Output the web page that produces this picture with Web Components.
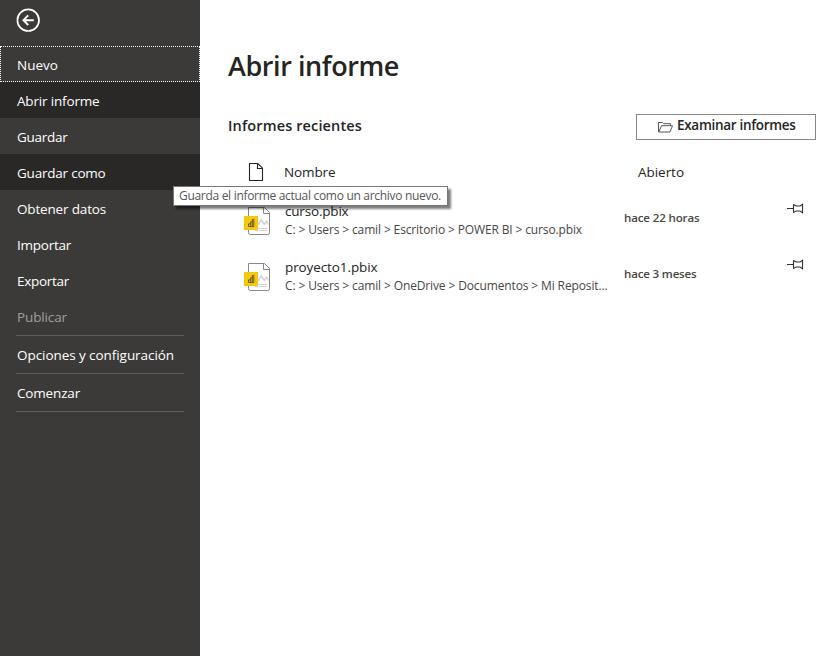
<!DOCTYPE html>
<html lang="es">
<head>
<meta charset="utf-8">
<title>Abrir informe</title>
<style>
html,body{margin:0;height:100%;background:#fff;overflow:hidden}
body{font-family:"Open Sans","Noto Sans",sans-serif;color:#252423}
</style>
</head>
<body>
<backstage-view></backstage-view>
<script>
const define=(name,html,setup)=>customElements.define(name,class extends HTMLElement{
  connectedCallback(){
    if(this.shadowRoot)return;
    const root=this.attachShadow({mode:'open'});
    root.innerHTML=html;
    if(setup)setup(this,root);
  }
});

/* Single line of text whose letter spacing is adjusted to fill a given width. */
define('fit-text',`<style>
:host{display:block;white-space:nowrap}
span{display:inline-block}
</style><span></span>`,(el,root)=>{
  const s=root.querySelector('span');
  const t=el.getAttribute('text');
  s.textContent=t;
  const w=+el.getAttribute('w');
  s.style.letterSpacing=((w-s.getBoundingClientRect().width)/t.length).toFixed(3)+'px';
});

define('back-button',`<style>
:host{display:block;height:46px;box-sizing:border-box;padding:8px 0 0 16px}
svg{display:block}
</style>
<svg width="24" height="24" viewBox="0 0 24 24" fill="none" stroke="#fff"><circle cx="12.2" cy="12.2" r="10.8" stroke-width="1.7"/><path d="M17.8 12.2H7.6M12.2 7.4L7.4 12.2l4.8 4.8" stroke-width="1.9"/></svg>`);

define('nav-item',`<style>
:host{display:flex;align-items:center;height:36px;box-sizing:border-box;padding:2px 0 0 17px;font-size:13.5px;line-height:20px;color:#fff}
:host([dark]){background:#292827}
:host([focused]){border:1px dotted #fff;padding:2px 0 0 16px}
:host([disabled]){color:#a19f9d}
</style><slot></slot>`);

define('nav-divider',`<style>
:host{display:block;height:1px;margin:1px 16px 0 16px;background:#605e5c}
</style>`);

define('side-nav',`<style>
:host{display:block;background:#3b3a38}
</style>
<back-button></back-button><slot></slot>`);

define('browse-button',`<style>
:host{display:flex;box-sizing:border-box;width:180px;height:26px;border:1px solid #8a8886;padding:0 0 0 21px;gap:4px;font-size:13.5px;line-height:21px;font-weight:600}
svg{margin-top:6px;flex:none}
</style>
<svg width="15" height="12" viewBox="0 0 15 12" fill="none" stroke="#555" stroke-width="1"><path d="M.5 10.8V1.5h4l1.2 1.2h6.8v2M.8 11L3.5 4.7h11L12 11z"/></svg>
<slot></slot>`);

define('page-icon',`<style>:host{display:block}svg{display:block}</style>
<svg width="16" height="20" viewBox="0 0 16 20" fill="none" stroke="#252423" stroke-width="1.1"><path d="M1.5 1.5h8.3l4.7 4.7v12.3h-13zM9.5 1.5v5h5"/></svg>`);

define('report-icon',`<style>:host{display:block}svg{display:block}</style>
<svg width="28" height="30" viewBox="0 0 28 30" fill="none">
<path d="M4.5 1.5h16l5 5v20.2q0 1.8-1.8 1.8H6.3q-1.8 0-1.8-1.8z" fill="#fff" stroke="#8a8886"/>
<path d="M19.5 1.5v6h6" stroke="#8a8886"/>
<path d="M14 19l3.2-5 3.2 4.5 2.2-3 1.8 3" stroke="#d2d0ce" stroke-width="1.3"/>
<path d="M11 22.5h12M11 24.5h12" stroke="#d8d6d4" stroke-width="1"/>
<path d="M0 10h14v14H0z" fill="#f2c811"/>
<path d="M4.5 20.5v-2.6h2.2M6.7 20.5v-4.6h1.6M4.5 20.5h5.3v-7H8.3v7" stroke="#5c5012" stroke-width=".9"/>
</svg>`);

define('pin-icon',`<style>:host{display:block}svg{display:block}</style>
<svg width="18" height="12" viewBox="0 0 18 12" fill="none" stroke="#323130" stroke-width="1.1"><path d="M0 5.5h6.5M6.5 1.3v8.4M6.5 1.5l2.7 1.5H13l2.5-1.7v8.4L13 8H9.2l-2.7 1.5"/></svg>`);

define('report-row',`<style>
:host{display:grid;grid-template-columns:41px 339px 163px 18px;height:56px}
.name{font-size:13.5px;line-height:18px;margin-top:-4px}
.path{font-size:12px;line-height:18px;margin-top:1px;color:#484644}
.when{font-size:11.5px;line-height:18px;font-weight:600;color:#484644;margin-top:3px}
pin-icon{margin-top:-3px}
</style>
<report-icon></report-icon>
<div><div class="name"><slot name="name"></slot></div><div class="path"><slot name="path"></slot></div></div>
<div class="when"><slot name="when"></slot></div>
<pin-icon></pin-icon>`);

define('tool-tip',`<style>
:host{display:block;position:absolute;left:173px;top:186px;box-sizing:border-box;width:275px;height:20px;border:1px solid #767676;background:#fff;box-shadow:3px 3px 2px rgba(0,0,0,.5);padding-left:5px;font-size:12px;line-height:18px;color:#575757}
</style><slot></slot>`);

define('backstage-view',`<style>
:host{display:grid;grid-template-columns:200px 1fr;height:100vh;position:relative}
main{padding:46px 19px 0 28px}
.title{font-size:27px;line-height:40px;font-weight:600}
.bar{display:flex;justify-content:space-between;margin-top:28px}
.sub{font-size:14.5px;line-height:24px;font-weight:600}
.head{display:grid;grid-template-columns:36px 354px 1fr;margin:22px 0 0 20px;font-size:13.5px;line-height:20px}
.rows{margin:24px 0 0 16px}
</style>
<side-nav>
<nav-item focused><fit-text w="41" text="Nuevo"></fit-text></nav-item>
<nav-item dark><fit-text w="82.5" text="Abrir informe"></fit-text></nav-item>
<nav-item><fit-text w="50.5" text="Guardar"></fit-text></nav-item>
<nav-item dark><fit-text w="88.5" text="Guardar como"></fit-text></nav-item>
<nav-item><fit-text w="89" text="Obtener datos"></fit-text></nav-item>
<nav-item><fit-text w="54" text="Importar"></fit-text></nav-item>
<nav-item><fit-text w="52" text="Exportar"></fit-text></nav-item>
<nav-item disabled><fit-text w="50" text="Publicar"></fit-text></nav-item>
<nav-divider></nav-divider>
<nav-item><fit-text w="157" text="Opciones y configuración"></fit-text></nav-item>
<nav-divider></nav-divider>
<nav-item><fit-text w="63" text="Comenzar"></fit-text></nav-item>
<nav-divider></nav-divider>
</side-nav>
<main>
<fit-text class="title" w="171" text="Abrir informe"></fit-text>
<div class="bar"><fit-text class="sub" w="134" text="Informes recientes"></fit-text>
<browse-button><fit-text w="118.5" text="Examinar informes"></fit-text></browse-button></div>
<div class="head"><page-icon></page-icon><fit-text w="51.5" text="Nombre"></fit-text><fit-text w="46" text="Abierto"></fit-text></div>
<div class="rows">
<report-row><fit-text slot="name" w="63.5" text="curso.pbix"></fit-text><fit-text slot="path" w="297" text="C: &gt; Users &gt; camil &gt; Escritorio &gt; POWER BI &gt; curso.pbix"></fit-text><fit-text slot="when" w="75.5" text="hace 22 horas"></fit-text></report-row>
<report-row><fit-text slot="name" w="92.5" text="proyecto1.pbix"></fit-text><fit-text slot="path" w="322.5" text="C: &gt; Users &gt; camil &gt; OneDrive &gt; Documentos &gt; Mi Reposit..."></fit-text><fit-text slot="when" w="72.5" text="hace 3 meses"></fit-text></report-row>
</div>
</main>
<tool-tip><fit-text w="262" text="Guarda el informe actual como un archivo nuevo."></fit-text></tool-tip>`);
</script>
</body>
</html>
